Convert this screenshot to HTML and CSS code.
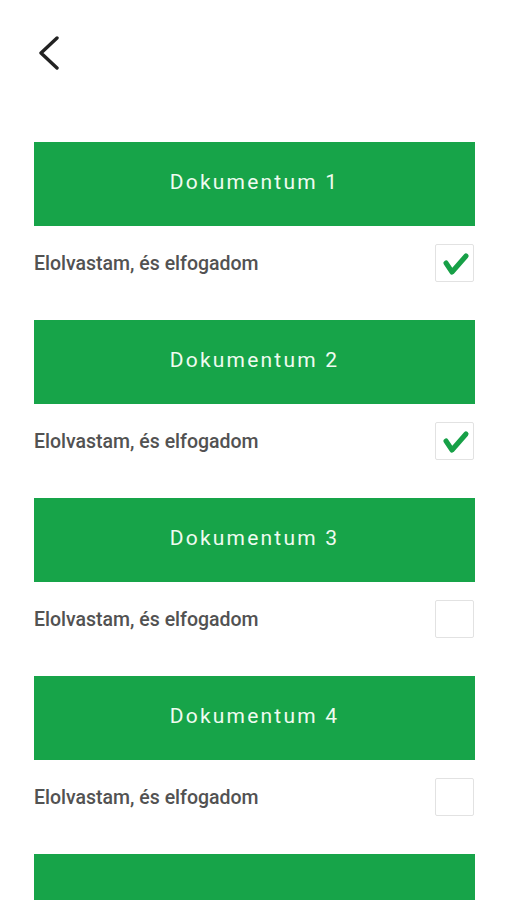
FILE: index.html
```html
<!DOCTYPE html>
<html lang="hu">
<head>
    <meta charset="UTF-8">
    <meta name="viewport" content="width=device-width, initial-scale=1.0">
    <title>Dokumentumok</title>
    <link rel="stylesheet" href="styles.css">
</head>
<body>
    <div class="header">
        <button class="back" aria-label="Vissza">
            <svg width="22" height="34" viewBox="0 0 22 34">
                <polyline points="19,2 3,17 19,32" fill="none" stroke="#222" stroke-width="3.4" stroke-linecap="round" stroke-linejoin="round"/>
            </svg>
        </button>
    </div>

    <div class="doc-list">
        <div class="doc">
            <div class="doc-title">Dokumentum 1</div>
            <label class="accept">
                <span>Elolvastam, és elfogadom</span>
                <span class="check checked">
                    <svg width="39" height="38" viewBox="0 0 39 38"><polyline points="11,19 17,28 31,12" fill="none" stroke="#17a047" stroke-width="5" stroke-linecap="round" stroke-linejoin="round"/></svg>
                </span>
            </label>
        </div>
        <div class="doc">
            <div class="doc-title">Dokumentum 2</div>
            <label class="accept">
                <span>Elolvastam, és elfogadom</span>
                <span class="check checked">
                    <svg width="39" height="38" viewBox="0 0 39 38"><polyline points="11,19 17,28 31,12" fill="none" stroke="#17a047" stroke-width="5" stroke-linecap="round" stroke-linejoin="round"/></svg>
                </span>
            </label>
        </div>
        <div class="doc">
            <div class="doc-title">Dokumentum 3</div>
            <label class="accept">
                <span>Elolvastam, és elfogadom</span>
                <span class="check"></span>
            </label>
        </div>
        <div class="doc">
            <div class="doc-title">Dokumentum 4</div>
            <label class="accept">
                <span>Elolvastam, és elfogadom</span>
                <span class="check"></span>
            </label>
        </div>
        <div class="doc">
            <div class="doc-title"></div>
        </div>
    </div>
</body>
</html>
```

FILE: styles.css
```css
body {
    margin: 0;
    background: #ffffff;
    font-family: Roboto, 'Noto Sans', sans-serif;
    height: 900px;
    overflow: hidden;
}
.header {
    padding: 36px 0 0 38px;
}
.back {
    display: block;
    padding: 0;
    border: none;
    background: none;
    cursor: pointer;
}
.back svg {
    display: block;
}
.doc-list {
    padding: 72px 32px 0 34px;
}
.doc {
    margin-bottom: 38px;
}
.doc-title {
    display: flex;
    justify-content: center;
    align-items: center;
    height: 84px;
    padding-bottom: 5px;
    box-sizing: border-box;
    background: #17a449;
    color: #effbf0;
    font-size: 21px;
    letter-spacing: 2.2px;
}
.accept {
    display: flex;
    justify-content: space-between;
    align-items: center;
    margin-top: 18px;
    color: #525252;
    font-size: 19.5px;
    font-weight: 500;
}
.check {
    width: 39px;
    height: 38px;
    margin-right: 1px;
    box-sizing: border-box;
    border: 1px solid #e2e2e2;
    border-radius: 2px;
    background: #ffffff;
    position: relative;
}
.check svg {
    position: absolute;
    top: -1px;
    left: -1px;
}
```
